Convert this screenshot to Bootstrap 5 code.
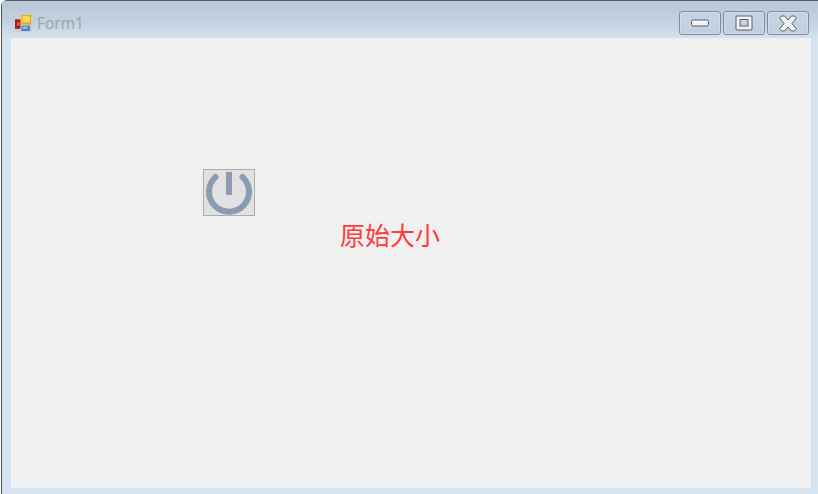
<!DOCTYPE html>
<html lang="en">
<head>
    <title>Form1</title>
    <meta charset="utf-8">
    <meta name="viewport" content="width=device-width, initial-scale=1">
    <link href="https://cdn.jsdelivr.net/npm/bootstrap@5.3.3/dist/css/bootstrap.min.css" rel="stylesheet">
    <style>
        html, body { height: 100%; background: #fff; overflow: hidden; }
        .win-frame { width: 817px; height: 494px; margin-left: 1px; background: #d6e3f1; border-top: 1px solid #555b60; border-left: 1px solid #50565c; border-top-left-radius: 6px; }
        .win-title { height: 37px; padding: 10px 9px 3px 12px; background: linear-gradient(#b8c7d7, #c3d0df 55%, #d5e2f0); }
        .win-logo { margin-top: 3px; }
        .win-name { font-family: "Open Sans", "Noto Sans", sans-serif; font-size: 15.500px; line-height: 20px; margin-top: 2px; color: #9ba3ab; margin-left: 5px; }
        .win-btns { gap: 2px; }
        .win-btn { width: 42px; height: 24px; padding: 0; border: 1px solid #7c8ea6; border-radius: 3px; background: linear-gradient(#c8d4e2, #bfcee0); box-shadow: inset 0 0 0 1px #d3dde9; }
        .win-client { width: 800px; height: 450px; margin-left: 9px; background: #f0f0f0; position: relative; }
        .power-btn { position: absolute; left: 192px; top: 131px; width: 52px; height: 47px; padding: 0; background: #e1e1e1; border: 1px solid #adadad; border-radius: 0; }
        .size-label { position: absolute; left: 329px; top: 180px; font-family: "Noto Sans CJK SC", sans-serif; font-size: 25px; line-height: 32px; color: #ff3b3b; }
    </style>
</head>
<body>

<div class="win-frame">
    <div class="win-title d-flex align-items-start">
        <svg class="win-logo" width="18" height="18" viewBox="0 0 17 17">
            <rect x="0" y="0" width="17" height="17" fill="#c9cdd2"/>
            <rect x="1" y="5" width="5" height="9" fill="#a81c10"/>
            <rect x="3" y="8" width="2" height="3" fill="#e8705c"/>
            <rect x="7" y="1" width="9" height="9" fill="#e8a810"/>
            <rect x="8" y="2" width="7" height="6" fill="#fbd64e"/>
            <rect x="7" y="11" width="8" height="5" fill="#3f7fd8"/>
            <rect x="8" y="12" width="5" height="2" fill="#9cc4f2"/>
        </svg>
        <span class="win-name">Form1</span>
        <div class="d-flex ms-auto win-btns">
            <button class="win-btn d-flex align-items-center justify-content-center" type="button">
                <svg width="18" height="8" viewBox="0 0 18 8"><rect x="0.500" y="1" width="17" height="6" rx="1.500" fill="#f4f4f4" stroke="#5a6068"/></svg>
            </button>
            <button class="win-btn d-flex align-items-center justify-content-center" type="button">
                <svg width="18" height="16" viewBox="0 0 18 16"><rect x="1" y="1" width="16" height="14" rx="1" fill="#f2f2f2" stroke="#5a6068"/><rect x="5" y="4.500" width="8" height="6.500" fill="#c3d0df" stroke="#5a6068"/></svg>
            </button>
            <button class="win-btn d-flex align-items-center justify-content-center" type="button">
                <svg width="20" height="17" viewBox="0 0 20 17"><path d="M1.500 3 3.500 1h3L10 5l3.500-4h3l2 2-4.500 5.500 4.500 5.500-2 2h-3L10 12l-3.500 4h-3l-2-2L6 8.500z" fill="#f0f0f0" stroke="#5a6068"/></svg>
            </button>
        </div>
    </div>
    <div class="win-client">
        <button class="power-btn d-flex align-items-center justify-content-center" type="button">
            <svg width="48" height="45" viewBox="0 0 48 45">
                <path d="M10.500 7A20 20 0 1 0 37.500 7" fill="none" stroke="#8b9bb0" stroke-width="6" stroke-linecap="round"/>
                <rect x="21" y="2" width="6" height="23" fill="#8b9bb0"/>
            </svg>
        </button>
        <span class="size-label">原始大小</span>
    </div>
</div>

</body>
</html>
